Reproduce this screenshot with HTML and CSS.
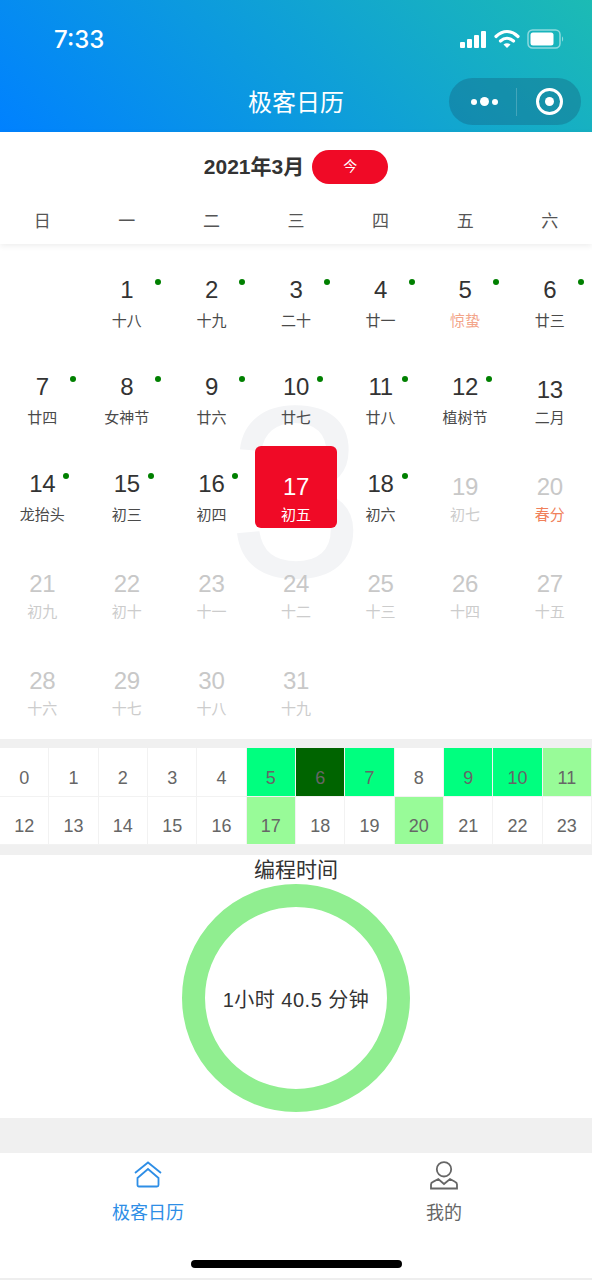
FILE: index.html
```html
<!DOCTYPE html>
<html lang="zh">
<head>
<meta charset="utf-8">
<title>极客日历</title>
<link rel="stylesheet" href="styles.css">
</head>
<body>
<div class="page">
	<div class="top">
		<div class="status">
			<span class="time">7:33</span>
			<div class="status-icons">
				<svg width="28" height="18" viewBox="0 0 28 18"><rect x="1" y="12" width="5" height="6" rx="1"/><rect x="8" y="9" width="5" height="9" rx="1"/><rect x="15" y="5" width="5" height="13" rx="1"/><rect x="22" y="1" width="5" height="17" rx="1"/></svg>
				<svg width="26" height="20" viewBox="0 0 26 20"><path class="wifi" d="M2 7.5C9 1 17 1 24 7.5"/><path class="wifi" d="M6.5 12C10.5 8.5 15.5 8.5 19.5 12"/><path d="M9.5 15.5C11.5 13.8 14.5 13.8 16.5 15.5L13 19Z"/></svg>
				<svg width="38" height="20" viewBox="0 0 38 20"><rect class="batt" x="1" y="1" width="32" height="18" rx="4.5"/><rect x="3.5" y="3.5" width="23" height="13" rx="2.5"/><path class="batt-tip" d="M35 7.5c1.5 .6 1.5 4.400 0 5z"/></svg>
			</div>
		</div>
		<div class="nav">
			<span class="nav-title">极客日历</span>
			<div class="capsule">
				<div class="capsule-dots"><i></i><b></b><i></i></div>
				<div class="capsule-line"></div>
				<div class="capsule-target"><span></span></div>
			</div>
		</div>
	</div>

	<div class="cal-head">
		<div class="month">
			<span class="month-text">2021年3月</span>
			<span class="today-btn">今</span>
		</div>
		<div class="weekdays">
			<span>日</span><span>一</span><span>二</span><span>三</span><span>四</span><span>五</span><span>六</span>
		</div>
	</div>

	<div class="cal-grid">
		<div class="watermark">3</div>
		<div class="day"></div>
		<div class="day dot"><span class="num">1</span><span class="sub">十八</span></div>
		<div class="day dot"><span class="num">2</span><span class="sub">十九</span></div>
		<div class="day dot"><span class="num">3</span><span class="sub">二十</span></div>
		<div class="day dot"><span class="num">4</span><span class="sub">廿一</span></div>
		<div class="day dot"><span class="num">5</span><span class="sub term">惊蛰</span></div>
		<div class="day dot"><span class="num">6</span><span class="sub">廿三</span></div>

		<div class="day dot"><span class="num">7</span><span class="sub">廿四</span></div>
		<div class="day dot"><span class="num">8</span><span class="sub">女神节</span></div>
		<div class="day dot"><span class="num">9</span><span class="sub">廿六</span></div>
		<div class="day dot wide"><span class="num">10</span><span class="sub">廿七</span></div>
		<div class="day dot wide"><span class="num">11</span><span class="sub">廿八</span></div>
		<div class="day dot wide"><span class="num">12</span><span class="sub">植树节</span></div>
		<div class="day"><span class="num">13</span><span class="sub">二月</span></div>

		<div class="day dot wide"><span class="num">14</span><span class="sub">龙抬头</span></div>
		<div class="day dot wide"><span class="num">15</span><span class="sub">初三</span></div>
		<div class="day dot wide"><span class="num">16</span><span class="sub">初四</span></div>
		<div class="day today"><span class="num">17</span><span class="sub">初五</span></div>
		<div class="day dot wide"><span class="num">18</span><span class="sub">初六</span></div>
		<div class="day later"><span class="num">19</span><span class="sub">初七</span></div>
		<div class="day later"><span class="num">20</span><span class="sub term2">春分</span></div>

		<div class="day later"><span class="num">21</span><span class="sub">初九</span></div>
		<div class="day later"><span class="num">22</span><span class="sub">初十</span></div>
		<div class="day later"><span class="num">23</span><span class="sub">十一</span></div>
		<div class="day later"><span class="num">24</span><span class="sub">十二</span></div>
		<div class="day later"><span class="num">25</span><span class="sub">十三</span></div>
		<div class="day later"><span class="num">26</span><span class="sub">十四</span></div>
		<div class="day later"><span class="num">27</span><span class="sub">十五</span></div>

		<div class="day later"><span class="num">28</span><span class="sub">十六</span></div>
		<div class="day later"><span class="num">29</span><span class="sub">十七</span></div>
		<div class="day later"><span class="num">30</span><span class="sub">十八</span></div>
		<div class="day later"><span class="num">31</span><span class="sub">十九</span></div>
	</div>

	<div class="hours">
		<div class="hour">0</div><div class="hour">1</div><div class="hour">2</div><div class="hour">3</div>
		<div class="hour">4</div><div class="hour lv2">5</div><div class="hour lv3">6</div><div class="hour lv2">7</div>
		<div class="hour">8</div><div class="hour lv2">9</div><div class="hour lv2">10</div><div class="hour lv1">11</div>
		<div class="hour">12</div><div class="hour">13</div><div class="hour">14</div><div class="hour">15</div>
		<div class="hour">16</div><div class="hour lv1">17</div><div class="hour">18</div><div class="hour">19</div>
		<div class="hour lv1">20</div><div class="hour">21</div><div class="hour">22</div><div class="hour">23</div>
	</div>

	<div class="coding">
		<div class="coding-title">编程时间</div>
		<div class="ring">1小时 40.5 分钟</div>
	</div>

	<div class="gap"></div>

	<div class="tabbar">
		<div class="tabs">
			<div class="tab active">
				<svg width="30" height="30" viewBox="0 0 30 30"><path d="M2 13L15 2.5L28 13"/><path d="M4.5 18L15 9L25.5 18V25Q25.5 26.5 24 26.5H6Q4.500 26.5 4.5 25Z"/></svg>
				<span>极客日历</span>
			</div>
			<div class="tab">
				<svg width="30" height="30" viewBox="0 0 30 30"><circle cx="15" cy="9.3" r="7.2"/><path d="M2 28.5V24.5Q2 22.5 4 21.8L9.300 19L15 24L21 19L26 21.8Q28 22.5 28 24.5V28.5Z"/></svg>
				<span>我的</span>
			</div>
		</div>
		<div class="home-bar"></div>
	</div>
</div>
</body>
</html>
```

FILE: styles.css
```css
*
{
	box-sizing: border-box;
}
body
{
	margin: 0;
	background-color: #ffffff;
	font-family: "Liberation Sans", "Noto Sans CJK SC", sans-serif;
	color: #333333;
}
.page
{
	width: 592px;
	height: 1280px;
	display: flex;
	flex-direction: column;
	overflow: hidden;
}

/* top bar */
.top
{
	height: 132px;
	background-image: linear-gradient(45deg, #0081ff, #1cbbb4);
	color: #ffffff;
}
.status
{
	height: 78px;
	display: flex;
	align-items: center;
	justify-content: space-between;
	padding: 0 27px 0 54px;
}
.time
{
	font-family: Inter, "Liberation Sans", sans-serif;
	font-size: 24px;
	font-weight: 500;
}
.status-icons
{
	display: flex;
	align-items: center;
	gap: 7px;
	fill: #ffffff;
}
.wifi
{
	fill: none;
	stroke: #ffffff;
	stroke-width: 3.2;
	stroke-linecap: round;
}
.batt
{
	fill: none;
	stroke: rgba(255, 255, 255, 0.5);
	stroke-width: 1.5;
}
.batt-tip
{
	fill: rgba(255, 255, 255, 0.5);
}
.nav
{
	height: 54px;
	display: flex;
	justify-content: center;
	position: relative;
}
.nav-title
{
	font-size: 24px;
	line-height: 50px;
}
.capsule
{
	position: absolute;
	top: 0;
	right: 11px;
	width: 132px;
	height: 47px;
	border-radius: 24px;
	background-color: rgba(20, 90, 120, 0.35);
	display: flex;
	align-items: center;
}
.capsule-dots
{
	width: 67px;
	display: flex;
	align-items: center;
	justify-content: center;
	gap: 3px;
	padding-left: 3px;
}
.capsule-dots i
{
	width: 6px;
	height: 6px;
	border-radius: 50%;
	background-color: #ffffff;
}
.capsule-dots b
{
	width: 9px;
	height: 9px;
	border-radius: 50%;
	background-color: #ffffff;
}
.capsule-line
{
	width: 1px;
	height: 28px;
	background-color: rgba(255, 255, 255, 0.2);
}
.capsule-target
{
	flex: 1;
	display: flex;
	justify-content: center;
}
.capsule-target span
{
	width: 27px;
	height: 27px;
	border: 3.5px solid #ffffff;
	border-radius: 50%;
	display: flex;
	align-items: center;
	justify-content: center;
}
.capsule-target span::before
{
	content: "";
	width: 9px;
	height: 9px;
	border-radius: 50%;
	background-color: #ffffff;
}

/* month header */
.cal-head
{
	height: 112px;
	background-color: #ffffff;
	box-shadow: 0 2px 6px rgba(0, 0, 0, 0.07);
	position: relative;
	z-index: 2;
}
.month
{
	height: 68px;
	display: flex;
	align-items: center;
	justify-content: center;
	gap: 8px;
	padding-top: 1px;
}
.month-text
{
	font-size: 21px;
	font-weight: bold;
	color: #333333;
	padding-bottom: 4px;
}
.today-btn
{
	width: 76px;
	height: 34px;
	border-radius: 17px;
	background-color: #f00a26;
	color: #ffffff;
	font-size: 14px;
	line-height: 32px;
	text-align: center;
}
.weekdays
{
	display: grid;
	grid-template-columns: repeat(7, 1fr);
	text-align: center;
	font-size: 17px;
	line-height: 44px;
	color: #555555;
}

/* days */
.cal-grid
{
	height: 495px;
	padding: 8px 0 17px;
	display: grid;
	grid-template-columns: repeat(7, 1fr);
	grid-auto-rows: 82px;
	row-gap: 15px;
	position: relative;
}
.watermark
{
	position: absolute;
	top: 118px;
	left: 0;
	right: 0;
	text-align: center;
	font-size: 245px;
	line-height: 260px;
	color: #f3f4f6;
}
.day
{
	width: 82px;
	justify-self: center;
	display: flex;
	flex-direction: column;
	align-items: center;
	border-radius: 6px;
	position: relative;
}
.num
{
	font-size: 24px;
	height: 28px;
	line-height: 28px;
	margin-top: 27px;
	letter-spacing: -0.3px;
}
.sub
{
	font-size: 15px;
	line-height: 20px;
	margin-top: 4px;
	color: #4a4a4a;
}
.dot .num
{
	margin-top: 24px;
	margin-bottom: 3px;
}
.dot::after
{
	content: "";
	position: absolute;
	top: 27px;
	left: 69px;
	width: 6px;
	height: 6px;
	border-radius: 50%;
	background-color: #008000;
}
.wide::after
{
	left: 62px;
}
.today
{
	background-color: #f00a26;
	color: #ffffff;
}
.today .sub
{
	color: #ffffff;
}
.later .num
{
	color: #c8c8c8;
}
.later .sub
{
	color: #cccccc;
}
.term
{
	color: #f3a58a;
}
.later .term2
{
	color: #f0805a;
}

/* hours */
.hours
{
	height: 116px;
	padding: 9px 0 10px;
	background-color: #f0f0f0;
	display: grid;
	grid-template-columns: repeat(12, 1fr);
	grid-auto-rows: 48.5px;
	position: relative;
}
.hour
{
	background-color: #ffffff;
	border-right: 1px solid #f2f2f2;
	border-bottom: 1px solid #f2f2f2;
	font-size: 18px;
	color: #666666;
	display: flex;
	align-items: flex-end;
	justify-content: center;
	padding-bottom: 7px;
}
.lv1
{
	background-color: #98fb98;
}
.lv2
{
	background-color: #00ff7f;
}
.lv3
{
	background-color: #006400;
}

/* coding time */
.coding
{
	height: 263px;
	display: flex;
	flex-direction: column;
	align-items: center;
}
.coding-title
{
	font-size: 21px;
	line-height: 29px;
}
.ring
{
	width: 228px;
	height: 228px;
	border: 23px solid #90ee90;
	border-radius: 50%;
	display: flex;
	align-items: center;
	justify-content: center;
	font-size: 20px;
	letter-spacing: 0.5px;
	white-space: nowrap;
}
.gap
{
	height: 35px;
	background-color: #f0f0f0;
}

/* tabs */
.tabbar
{
	flex: 1;
	position: relative;
	border-bottom: 2px solid #eeeeee;
}
.tabs
{
	display: flex;
	padding-top: 7px;
}
.tab
{
	width: 50%;
	display: flex;
	flex-direction: column;
	align-items: center;
	font-size: 18px;
	line-height: 30px;
	color: #666666;
}
.tab svg
{
	fill: none;
	stroke: #666666;
	stroke-width: 1.8;
	margin-bottom: 8px;
}
.active
{
	color: #2e8ee6;
}
.active svg
{
	stroke: #2e8ee6;
}
.home-bar
{
	position: absolute;
	left: 191px;
	bottom: 10px;
	width: 211px;
	height: 8px;
	border-radius: 4px;
	background-color: #000000;
}
```
